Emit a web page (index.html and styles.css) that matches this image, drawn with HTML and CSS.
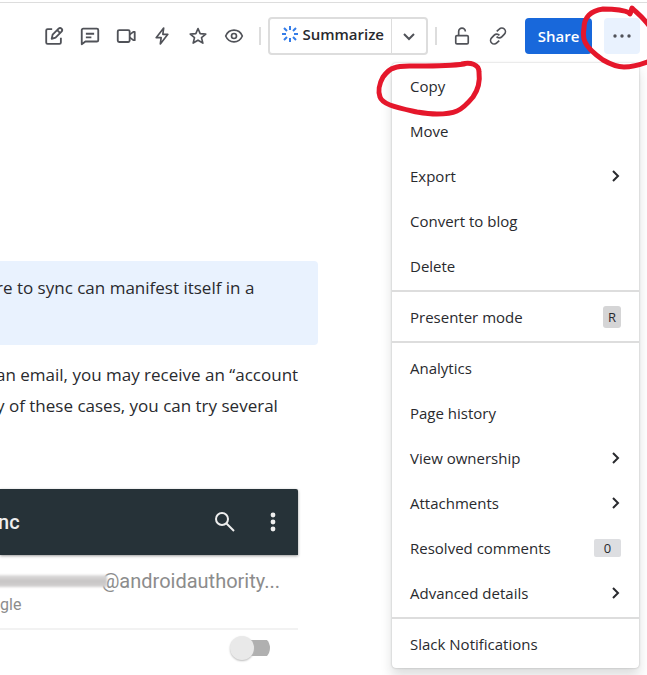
FILE: index.html
```html
<!doctype html>
<html lang="en">
<head>
	<meta charset="UTF-8">
	<title>Account sync</title>

	<link rel="stylesheet" href="styles.css">
</head>
<body>

	<header class="toolbar">
		<button class="icon-button" aria-label="Edit">
			<svg class="icon icon-wide" viewBox="0 0 24 24"><path d="M10 4.500H5A1.500 1.500 0 0 0 3.500 6v13A1.500 1.500 0 0 0 5 20.500h13a1.500 1.500 0 0 0 1.500-1.500v-5"/><path d="M9.500 15l1-4.500 6.500-6.500a2.200 2.200 0 0 1 3.200 3.200L13.700 13.700z"/><path d="M15.500 5.500l3 3"/></svg>
		</button>
		<button class="icon-button" aria-label="Comments">
			<svg class="icon icon-wide" viewBox="0 0 24 24"><path d="M3 21V5.500A1.500 1.500 0 0 1 4.500 4h15A1.500 1.500 0 0 1 21 5.500v11a1.500 1.500 0 0 1-1.500 1.500H7z"/><path d="M7.500 9.500h9M7.500 13.500h6"/></svg>
		</button>
		<button class="icon-button" aria-label="Record video">
			<svg class="icon icon-wide" viewBox="0 0 24 24"><rect x="3" y="5.500" width="13" height="13" rx="1.500"/><path d="M16 10.500l4-3h1.500v9H20l-4-3"/></svg>
		</button>
		<button class="icon-button" aria-label="Automation">
			<svg class="icon" viewBox="0 0 24 24"><path d="M14 2.500L5 14h6l-1 7.500L19 10h-6z"/></svg>
		</button>
		<button class="icon-button" aria-label="Star">
			<svg class="icon" viewBox="0 0 24 24"><path d="M12 3l2.600 6.200 6.700.5-5.100 4.300 1.600 6.500L12 17l-5.800 3.500L7.800 14 2.700 9.700l6.700-.5z"/></svg>
		</button>
		<button class="icon-button" aria-label="Watch">
			<svg class="icon" viewBox="0 0 24 24"><path d="M2 12c2-4.600 5.500-7 10-7s8 2.400 10 7c-2 4.600-5.500 7-10 7s-8-2.400-10-7z"/><circle cx="12" cy="12" r="3"/></svg>
		</button>
		<span class="separator"></span>
		<div class="summarize">
			<button class="summarize-main">
				<svg class="spark" viewBox="0 0 18 18"><path d="M9 1v4M9 13v4M1 9h4M13 9h4M3 3l3 3M12 12l3 3M15 3l-3 3M6 12l-3 3"/></svg>
				Summarize
			</button>
			<button class="summarize-more" aria-label="More summary options">
				<svg class="chevron" viewBox="0 0 12 12"><path d="M1 4l5 5 5-5"/></svg>
			</button>
		</div>
		<span class="separator"></span>
		<button class="icon-button" aria-label="Restrictions">
			<svg class="icon" viewBox="0 0 24 24"><rect x="4.500" y="11.500" width="15" height="10" rx="1.500"/><path d="M8 11V6.500a4 4 0 0 1 8 0"/></svg>
		</button>
		<button class="icon-button" aria-label="Copy link">
			<svg class="icon" viewBox="0 0 24 24"><path d="M10.500 6.500L13.500 3.700a4.300 4.300 0 0 1 6.200 6L16.500 13a4.200 4.200 0 0 1-6.200-.2"/><path d="M13.500 17.500l-3 2.800a4.300 4.300 0 0 1-6.200-6L7.500 11a4.200 4.200 0 0 1 6.200.2"/></svg>
		</button>
		<button class="share">Share</button>
		<button class="more" aria-label="More actions" aria-expanded="true">
			<svg class="dots" viewBox="0 0 20 4"><circle cx="3" cy="2" r="1.700"/><circle cx="10" cy="2" r="1.700"/><circle cx="17" cy="2" r="1.700"/></svg>
		</button>
	</header>

	<!-- page content -->
	<main class="article">
		<div class="panel">
			<p class="text">re to sync can manifest itself in a</p>
		</div>
		<p class="text">an email, you may receive an “account<br>y of these cases, you can try several</p>

		<!-- phone sync screen -->
		<div class="phone">
			<div class="phone-bar">
				<span class="phone-title">nc</span>
				<svg class="phone-search" viewBox="0 0 22 22"><circle cx="8" cy="8" r="6"/><path d="M12.500 12.500l7.500 7.500"/></svg>
				<svg class="phone-dots" viewBox="0 0 6 20"><circle cx="3" cy="3" r="2.400"/><circle cx="3" cy="10" r="2.400"/><circle cx="3" cy="17" r="2.400"/></svg>
			</div>
			<div class="phone-account">
				<div class="phone-mail">
					<span class="smudge"></span>
					<span>@androidauthority...</span>
				</div>
				<div class="phone-provider">gle</div>
			</div>
			<div class="phone-row">
				<input class="switch" type="checkbox" aria-label="Sync">
			</div>
		</div>
	</main>

	<!-- more actions menu -->
	<nav class="menu">
		<div class="group">
			<button class="item">Copy</button>
			<button class="item">Move</button>
			<button class="item">Export <svg class="arrow" viewBox="0 0 12 12"><path d="M4 1l5 5-5 5"/></svg></button>
			<button class="item">Convert to blog</button>
			<button class="item">Delete</button>
		</div>
		<div class="group">
			<button class="item">Presenter mode <kbd class="key">R</kbd></button>
		</div>
		<div class="group">
			<button class="item">Analytics</button>
			<button class="item">Page history</button>
			<button class="item">View ownership <svg class="arrow" viewBox="0 0 12 12"><path d="M4 1l5 5-5 5"/></svg></button>
			<button class="item">Attachments <svg class="arrow" viewBox="0 0 12 12"><path d="M4 1l5 5-5 5"/></svg></button>
			<button class="item">Resolved comments <span class="count">0</span></button>
			<button class="item">Advanced details <svg class="arrow" viewBox="0 0 12 12"><path d="M4 1l5 5-5 5"/></svg></button>
		</div>
		<div class="group">
			<button class="item">Slack Notifications</button>
		</div>
	</nav>

	<!-- red pen marks -->
	<svg class="marks" viewBox="370 0 277 130">
		<path d="M462 64C470 62 479 64 479 72C480 80 478 90 473 97C468 103 462 109 457 111C450 114 442 114 437 114C429 114 423 113 417 112C408 110 398 108 390 105C385 103 381 100 380 97C378 92 379 84 383 77C386 73 389 69 394 68C400 65 409 66 418 66C434 66 450 66 464 64"/>
		<path d="M630 14L632 8C637 13 644 18 650 27"/>
		<path d="M630 13C622 9 612 9 603 9C596 10 592 12 589 15C586 18 584 23 584 28C583 34 583 38 585 42C588 49 596 55 603 60C610 64 616 67 624 67C632 67 640 65 650 61"/>
	</svg>

</body>
</html>
```
FILE: styles.css
```css
* {margin: 0; padding: 0; box-sizing: border-box;}
body {font: normal 15px/20px "Open Sans", "Noto Sans", sans-serif; color: #292a2e; background: #fff; position: relative; min-height: 100vh; padding-top: 2px;}
button {font: inherit; color: inherit; background: none; border: 0; cursor: pointer;}
svg {fill: none; stroke: currentColor; display: block; flex: none;}

/* toolbar */
.toolbar {display: flex; justify-content: flex-end; align-items: center; padding: 14px 7px; border-top: 1px solid #ddd;}
.icon-button {display: flex; align-items: center; justify-content: center; width: 36px; height: 36px; color: #505258;}
.icon {width: 20px; height: 20px; stroke-width: 2; stroke-linejoin: round;}
.icon-wide {width: 22px; height: 22px;}
.separator {width: 2px; height: 18px; margin: 0 7px; background: #ddd;}
.summarize {display: flex; height: 38px; border: 2px solid #ddd; border-radius: 4px;}
.summarize-main {display: flex; align-items: center; gap: 3px; padding: 0 7px 4px 11px; font-weight: 600;}
.summarize-more {display: flex; align-items: center; justify-content: center; width: 35px; border-left: 1px solid #ddd; color: #505258;}
.spark {width: 18px; height: 18px; stroke: #357de8; stroke-width: 2;}
.chevron {width: 12px; height: 12px; stroke-width: 2;}
.share {width: 67px; height: 36px; margin: 0 12px 0 9px; border-radius: 4px; background: #1868db; color: #fff; font-weight: 600;}
.more {display: flex; align-items: center; justify-content: center; width: 36px; height: 36px; border-radius: 4px; background: #e9f2fe;}
.dots {width: 20px; height: 4px; fill: #505258; stroke: none;}

/* content */
.article {margin: 192px 329px 0 0; overflow: hidden;}
.panel {min-height: 84px; margin-bottom: 14px; padding: 11px 0; background: #e9f2fe; border-radius: 0 4px 4px 0;}
.text {margin-left: -4px; font-size: 17px; line-height: 31px; white-space: nowrap;}

.phone {margin: 68px 20px 0 0; font-family: Roboto, sans-serif; color: #8c8c8c;}
.phone-bar {display: flex; align-items: center; height: 66px; padding-right: 22px; border-radius: 0 2px 0 0; background: #263238; color: #eee; box-shadow: 0 1px 3px #999;}
.phone-title {flex: 1; margin-left: -2px; font-size: 20px; font-weight: 500;}
.phone-search {width: 22px; height: 22px; margin-right: 34px; stroke-width: 2;}
.phone-dots {width: 6px; height: 20px; fill: #eee; stroke: none;}
.phone-account {padding: 14px 18px 11px 0; border-bottom: 2px solid #f2f2f2;}
.phone-mail {display: flex; align-items: center; font-size: 20px; line-height: 24px;}
.smudge {flex: 1; height: 12px; margin: 0 -6px 0 -4px; background: linear-gradient(#e0dede, #c6c4c4, #d4d2d2); filter: blur(1px);}
.phone-provider {font-size: 16px; line-height: 24px;}
.phone-row {display: flex; justify-content: flex-end; padding: 6px 28px 6px 0;}
.switch {appearance: none; display: flex; align-items: center; width: 40px; height: 24px; background: linear-gradient(#b0b0b0, #b0b0b0) right / 30px 16px no-repeat; border-radius: 12px;}
.switch::before {content: ""; width: 24px; height: 24px; border-radius: 50%; background: #e9e9e9; box-shadow: 0 1px 2px #bbb;}

/* menu */
.menu {position: absolute; top: 63px; right: 8px; width: 247px; background: #fff; border-radius: 4px; box-shadow: 0 8px 12px #1e1f2126, 0 0 2px #1e1f214f;}
.group {padding: 2px 0;}
.group:first-child {padding-top: 0;}
.group + .group {border-top: 2px solid #ddd;}
.item {display: flex; align-items: center; justify-content: space-between; width: 100%; height: 45px; padding: 0 18px; text-align: left;}
.arrow {width: 12px; height: 12px; stroke-width: 2;}
.key {padding: 0 5px; border-radius: 3px; background: #d5d5d6; font: normal 13px/22px "Open Sans", sans-serif;}
.count {width: 27px; border-radius: 2px; background: #dddee1; font-size: 13px; line-height: 18px; text-align: center;}

.marks {position: absolute; top: 0; right: 0; width: 277px; height: 130px; stroke: #e5172b; stroke-width: 5; stroke-linecap: round; stroke-linejoin: round; pointer-events: none;}
```
